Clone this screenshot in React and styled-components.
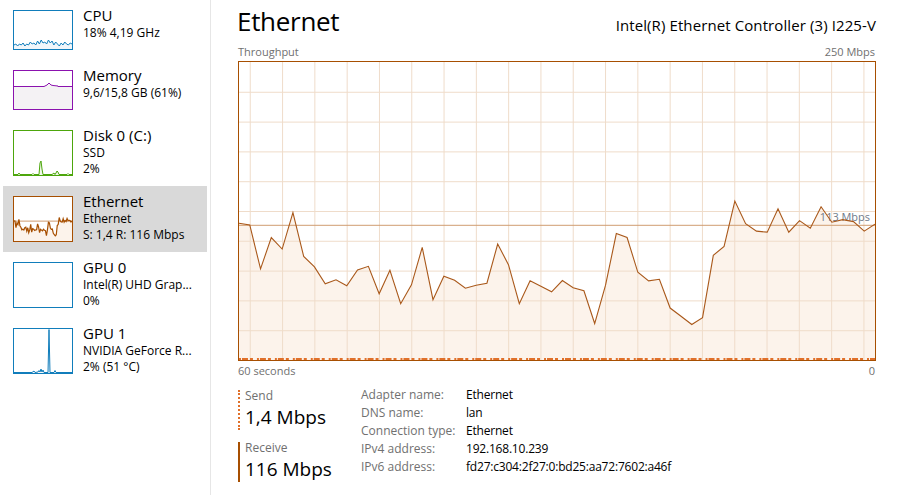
import { Fragment } from "react";
import styled, { createGlobalStyle } from "styled-components";

const GlobalStyle = createGlobalStyle`
  body {
    margin: 0;
    background: #ffffff;
    font-family: "Open Sans", "Noto Sans", sans-serif;
    color: #000000;
  }
`;

// receive samples, absolute screen y of the reference graph (top 61, height 300)
const receive = [
  223.3, 225, 269.3, 237.7, 249.3, 212.7, 256.7, 267.3, 284.3, 280.3, 286.3,
  270.3, 266.7, 294.3, 270.7, 304.3, 285.3, 247.7, 300.3, 276.7, 280.7, 288.7,
  285.7, 283.7, 244.3, 265, 304.3, 281.3, 286.7, 292.3, 281, 288.3, 291.3,
  324.3, 285.7, 233.7, 237.7, 272.7, 281.3, 279.7, 308.7, 317, 325.3, 318.3,
  255.7, 246.7, 201, 223.7, 231.3, 232.3, 208.7, 232.3, 220.7, 228.3, 206.7,
  222.3, 219.7, 221.7, 231.3, 224.3,
].map((y) => y - 61);

const W = 638;
const H = 300;
const step = W / (receive.length - 1);
const linePoints = receive.map((y, i) => `${(i * step).toFixed(1)},${y.toFixed(1)}`).join(" ");
const areaPoints = `0,${H} ${linePoints} ${W},${H}`;
const scaleY = H - (113 / 250) * H;

const devices = [
  { name: "CPU", lines: ["18% 4,19 GHz"], color: "#117dbb", kind: "cpu" },
  { name: "Memory", lines: ["9,6/15,8 GB (61%)"], color: "#8b12ae", kind: "mem" },
  { name: "Disk 0 (C:)", lines: ["SSD", "2%"], color: "#4da60c", kind: "disk" },
  { name: "Ethernet", lines: ["Ethernet", "S: 1,4 R: 116 Mbps"], color: "#a74f01", kind: "eth", selected: true },
  { name: "GPU 0", lines: ["Intel(R) UHD Grap...", "0%"], color: "#117dbb", kind: "none" },
  { name: "GPU 1", lines: ["NVIDIA GeForce R...", "2% (51 °C)"], color: "#117dbb", kind: "gpu" },
];

const properties = [
  ["Adapter name:", "Ethernet"],
  ["DNS name:", "lan"],
  ["Connection type:", "Ethernet"],
  ["IPv4 address:", "192.168.10.239"],
  ["IPv6 address:", "fd27:c304:2f27:0:bd25:aa72:7602:a46f"],
];

const Window = styled.div`
  display: flex;
  width: 898px;
  height: 503px;
  overflow: hidden;
`;

const Sidebar = styled.nav`
  width: 204px;
  padding: 0 3px;
  height: 495px;
  border-right: 1px solid #e6e6e6;
  flex-shrink: 0;
`;

const Item = styled.div`
  display: flex;
  align-items: flex-start;
  gap: 10px;
  padding: 10px 10px;
  background: ${(p) => (p.$selected ? "#d9d9d9" : "transparent")};
`;

const Thumb = styled.div`
  width: 58px;
  height: ${(p) => (p.$tall ? 44 : 38)}px;
  border: 1px solid ${(p) => p.$color};
  background: #ffffff;
  flex-shrink: 0;
  svg {
    display: block;
    width: 100%;
    height: 100%;
  }
`;

const ItemText = styled.div`
  display: flex;
  flex-direction: column;
  margin: -5px 0 -8px;
  min-width: 0;
`;

const ItemName = styled.div`
  font-size: 15px;
  line-height: 20px;
  color: #000;
`;

const ItemLine = styled.div`
  font-size: 12px;
  line-height: 16px;
  color: #000;
  white-space: nowrap;
`;

const Main = styled.main`
  flex: 1;
  padding: 0 22px 0 26px;
  display: flex;
  flex-direction: column;
`;

const Header = styled.div`
  display: flex;
  justify-content: space-between;
  align-items: baseline;
  height: 42px;
`;

const Title = styled.h1`
  margin: 0;
  font-size: 26px;
  font-weight: 400;
  line-height: 42px;
  letter-spacing: -0.3px;
`;

const Adapter = styled.div`
  font-size: 15px;
  letter-spacing: 0.1px;
  color: #000;
`;

const Caption = styled.div`
  display: flex;
  justify-content: space-between;
  font-size: 11px;
  line-height: 19px;
  color: #707070;
  padding: 0 1px;
`;

const Chart = styled.div`
  height: 298px;
  border: 1px solid #a74f01;
  margin: 0 0 0 1px;
  svg {
    display: block;
    width: 100%;
    height: 100%;
  }
`;

const Footer = styled.div`
  display: flex;
  margin-top: 10px;
`;

const Rates = styled.div`
  width: 123px;
  display: flex;
  flex-direction: column;
  gap: 12px;
  padding-left: 1px;
`;

const Rate = styled.div`
  border-left: 2px ${(p) => (p.$dotted ? "dotted #e0702a" : "solid #a74f01")};
  padding-left: 5px;
  height: 40px;
`;

const RateLabel = styled.div`
  font-size: 12px;
  line-height: 16px;
  color: #707070;
  margin-top: -2px;
`;

const RateValue = styled.div`
  font-size: 19px;
  line-height: 26px;
  color: #000;
`;

const Props = styled.div`
  display: grid;
  grid-template-columns: 105px auto;
  grid-auto-rows: 18px;
  font-size: 12px;
  line-height: 18px;
  margin-top: -4px;
`;

const PropLabel = styled.div`
  color: #707070;
`;

const PropValue = styled.div`
  color: #000;
  letter-spacing: -0.2px;
`;

function Spark({ kind, color }) {
  if (kind === "cpu") {
    const ys = [34, 33, 35, 33, 34, 32, 35, 33, 34, 31, 33, 32, 34, 30, 33, 29, 32, 31, 33, 29, 32, 30, 34, 31, 33, 35, 32, 34, 31, 33, 34, 32, 33];
    const pts = ys.map((y, i) => `${(i * 58) / (ys.length - 1)},${y}`).join(" ");
    return (
      <svg viewBox="0 0 58 38" preserveAspectRatio="none">
        <polygon points={`0,38 ${pts} 58,38`} fill="#f1f6fa" />
        <polyline points={pts} fill="none" stroke={color} strokeWidth="1" />
      </svg>
    );
  }
  if (kind === "mem") {
    return (
      <svg viewBox="0 0 58 38" preserveAspectRatio="none">
        <polygon points="0,15.5 30,15.5 33,14 35,12 37,14 39,14.5 44,15 44,15.5 58,15.5 58,38 0,38" fill="#f4f2f4" />
        <polyline points="0,15.5 30,15.5 33,14 35,12 37,14 39,14.5 44,15 44,15.5 58,15.5" fill="none" stroke={color} strokeWidth="1" />
      </svg>
    );
  }
  if (kind === "disk") {
    const pts = "0,43.5 4,43.5 5,42 6,43.5 18,43.5 19,42.5 20,43.5 25,43.5 26,32 27,30 28,38 29,43.5 38,43.5 40,42 41,43.5 42,42 43,40 44,41 45,43.5 53,43.5 54,42.5 55,43.5 58,43.5";
    return (
      <svg viewBox="0 0 58 44" preserveAspectRatio="none">
        <polygon points={`0,44 ${pts} 58,44`} fill="#eff7e9" />
        <polyline points={pts} fill="none" stroke={color} strokeWidth="1" />
      </svg>
    );
  }
  if (kind === "eth") {
    return (
      <svg viewBox={`0 0 ${W} ${H}`} preserveAspectRatio="none">
        <polygon points={areaPoints} fill="#fcf3eb" />
        <line x1="0" x2={W} y1={scaleY} y2={scaleY} stroke="#cf9b70" strokeWidth="1" vectorEffect="non-scaling-stroke" />
        <polyline points={linePoints} fill="none" stroke={color} strokeWidth="1.2" vectorEffect="non-scaling-stroke" />
      </svg>
    );
  }
  if (kind === "gpu") {
    const pts = "0,43.5 18,43.5 20,42 21,43.5 24,43 25,41.5 26,43 27,40 28,43 29,41 30,43.5 34,43.5 35,0.5 36,43.5 40,43.5 41,41.5 42,43.5 58,43.5";
    return (
      <svg viewBox="0 0 58 44" preserveAspectRatio="none">
        <polygon points={`0,44 ${pts} 58,44`} fill="#f1f6fa" />
        <polyline points={pts} fill="none" stroke={color} strokeWidth="1" />
      </svg>
    );
  }
  return null;
}

function ThroughputChart() {
  const verticals = [];
  for (let x = 11.3; x < W; x += 32.4) verticals.push(x);
  const horizontals = [];
  for (let y = 30; y < H; y += 30) horizontals.push(y);
  return (
    <svg viewBox={`0 0 ${W} ${H}`} preserveAspectRatio="none">
      <polygon points={areaPoints} fill="#fcf3eb" />
      {verticals.map((x) => (
        <line key={`v${x}`} x1={x} x2={x} y1="0" y2={H} stroke="#efdcca" strokeWidth="1" />
      ))}
      {horizontals.map((y) => (
        <line key={`h${y}`} x1="0" x2={W} y1={y + 0.5} y2={y + 0.5} stroke="#efdcca" strokeWidth="1" />
      ))}
      <line x1="0" x2={W} y1={scaleY} y2={scaleY} stroke="#cf9b70" strokeWidth="1" />
      <text x={W - 5} y={scaleY - 4} textAnchor="end" fontSize="11" fill="#6f7a8a" fontFamily="Open Sans, sans-serif">
        113 Mbps
      </text>
      <polyline points={linePoints} fill="none" stroke="#a9581a" strokeWidth="1.1" />
      <line x1="0" x2={W} y1={H - 1} y2={H - 1} stroke="#e0702a" strokeWidth="2" strokeDasharray="2 1 6 2 3 4" />
    </svg>
  );
}

export default function App() {
  return (
    <>
      <GlobalStyle />
      <Window>
        <Sidebar>
          {devices.map((d) => (
            <Item key={d.name} $selected={d.selected}>
              <Thumb $color={d.color} $tall={d.lines.length > 1}>
                <Spark kind={d.kind} color={d.color} />
              </Thumb>
              <ItemText>
                <ItemName>{d.name}</ItemName>
                {d.lines.map((l) => (
                  <ItemLine key={l}>{l}</ItemLine>
                ))}
              </ItemText>
            </Item>
          ))}
        </Sidebar>
        <Main>
          <Header>
            <Title>Ethernet</Title>
            <Adapter>Intel(R) Ethernet Controller (3) I225-V</Adapter>
          </Header>
          <Caption>
            <span>Throughput</span>
            <span>250 Mbps</span>
          </Caption>
          <Chart>
            <ThroughputChart />
          </Chart>
          <Caption>
            <span>60 seconds</span>
            <span>0</span>
          </Caption>
          <Footer>
            <Rates>
              <Rate $dotted>
                <RateLabel>Send</RateLabel>
                <RateValue>1,4 Mbps</RateValue>
              </Rate>
              <Rate>
                <RateLabel>Receive</RateLabel>
                <RateValue>116 Mbps</RateValue>
              </Rate>
            </Rates>
            <Props>
              {properties.map(([k, v]) => (
                <Fragment key={k}>
                  <PropLabel>{k}</PropLabel>
                  <PropValue>{v}</PropValue>
                </Fragment>
              ))}
            </Props>
          </Footer>
        </Main>
      </Window>
    </>
  );
}
